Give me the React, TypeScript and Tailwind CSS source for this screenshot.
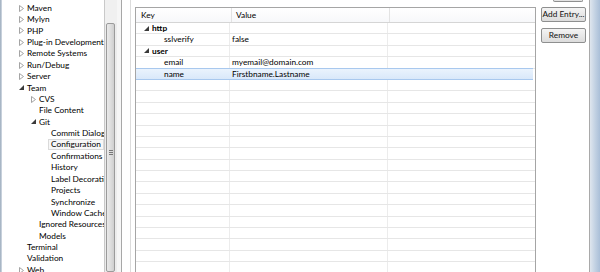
import React from "react";

type Node = { label: string; level: number; mark?: "open" | "closed"; focus?: boolean };

const TREE: Node[] = [
  { label: "Install/Update", level: 0, mark: "closed" },
  { label: "Maven", level: 0, mark: "closed" },
  { label: "Mylyn", level: 0, mark: "closed" },
  { label: "PHP", level: 0, mark: "closed" },
  { label: "Plug-in Development", level: 0, mark: "closed" },
  { label: "Remote Systems", level: 0, mark: "closed" },
  { label: "Run/Debug", level: 0, mark: "closed" },
  { label: "Server", level: 0, mark: "closed" },
  { label: "Team", level: 0, mark: "open" },
  { label: "CVS", level: 1, mark: "closed" },
  { label: "File Content", level: 1 },
  { label: "Git", level: 1, mark: "open" },
  { label: "Commit Dialog", level: 2 },
  { label: "Configuration", level: 2, focus: true },
  { label: "Confirmations and Warnings", level: 2 },
  { label: "History", level: 2 },
  { label: "Label Decorations", level: 2 },
  { label: "Projects", level: 2 },
  { label: "Synchronize", level: 2 },
  { label: "Window Cache", level: 2 },
  { label: "Ignored Resources", level: 1 },
  { label: "Models", level: 1 },
  { label: "Terminal", level: 0 },
  { label: "Validation", level: 0 },
  { label: "Web", level: 0, mark: "closed" },
];

type Row = { key: string; value?: string; section?: boolean; selected?: boolean };

const ROWS: Row[] = [
  { key: "http", section: true },
  { key: "sslverify", value: "false" },
  { key: "user", section: true },
  { key: "email", value: "myemail@domain.com" },
  { key: "name", value: "Firstbname.Lastname", selected: true },
  ...Array.from({ length: 17 }, () => ({ key: "" })),
];

const INDENT = ["pl-[25px]", "pl-[37px]", "pl-[49px]"];
const ARROW_POS = ["left-[17px]", "left-[29px]", "left-[41px]"];

function Arrow({ mark }: { mark: "open" | "closed" }) {
  if (mark === "open")
    return (
      <svg width="5" height="5" viewBox="0 0 5 5">
        <path d="M5 0 L5 5 L0 5 Z" fill="#3a3a3a" />
      </svg>
    );
  return (
    <svg width="5" height="7" viewBox="0 0 5 7">
      <path d="M0.5 0.5 L4.5 3.5 L0.5 6.5 Z" fill="none" stroke="#9a9a9a" strokeWidth="0.9" />
    </svg>
  );
}

function Button({ children }: { children: React.ReactNode }) {
  return (
    <div className="w-[45px] h-[15px] rounded-[2px] border border-[#8e8f8f] bg-gradient-to-b from-[#f4f4f4] to-[#dcdcdc] flex items-center justify-center whitespace-nowrap text-[#111]">
      {children}
    </div>
  );
}

export default function App() {
  return (
    <div className="w-[600px] h-[272px] flex overflow-hidden bg-white text-[8.3px] text-black" style={{ fontFamily: 'Lato, "Liberation Sans", sans-serif' }}>
      {/* window edge */}
      <div className="w-[2px] bg-gradient-to-r from-[#9aaabb] to-[#d6dde6]" />

      {/* preference tree */}
      <div className="w-[102px] overflow-hidden">
        <div className="mt-[-9px]">
          {TREE.map((n, i) => (
            <div key={i} className={`relative h-[11.4px] flex items-center whitespace-nowrap ${INDENT[n.level]}`}>
              {n.mark && (
                <span className={`absolute top-0 bottom-0 flex items-center ${ARROW_POS[n.level]}`}>
                  <Arrow mark={n.mark} />
                </span>
              )}
              <span className={n.focus ? "-ml-[3px] px-[2px] border border-[#dadada] bg-[#f7f7f7] leading-[9px]" : ""}>{n.label}</span>
            </div>
          ))}
        </div>
      </div>

      {/* tree scrollbar */}
      <div className="w-[13px] border-l border-[#c9c9c9] bg-[#ececec] flex flex-col">
        <div className="h-[23px] bg-[#f0f0f0]" />
        <div className="ml-[1px] w-[9px] flex-1 rounded-[2px] border border-[#9b9b9b] bg-gradient-to-r from-[#eaeaea] via-[#dedede] to-[#cfcfcf] flex flex-col items-center pt-[126px] gap-[1px]">
          <div className="w-[4px] h-px bg-[#777]" />
          <div className="w-[4px] h-px bg-[#777]" />
          <div className="w-[4px] h-px bg-[#777]" />
        </div>
      </div>

      {/* sash */}
      <div className="w-[4px] bg-[#f6f6f6]" />
      <div className="w-px bg-[#a7a7a7]" />
      <div className="w-[8px]" />
      <div className="w-px bg-[#dcdcdc]" />
      <div className="w-[4px]" />

      {/* config table */}
      <div className="pt-[7px] flex">
        <div className="w-[401px] border border-[#a5a5a5] border-b-0 bg-white">
          <div className="h-[15px] flex border-b border-[#d5d5d5] bg-gradient-to-b from-white to-[#f7f8fa]">
            <div className="w-[96px] pl-[5px] flex items-center border-r border-[#e3e3e3]">Key</div>
            <div className="w-[158px] pl-[4px] flex items-center border-r border-[#e3e3e3]">Value</div>
            <div className="flex-1" />
          </div>
          {ROWS.map((r, i) => (
            <div
              key={i}
              className={`flex border-b ${r.selected ? "bg-gradient-to-b from-[#eaf3fd] to-[#d9e8fa] border-[#a8c8ee] border-t border-t-[#a8c8ee] -mt-px h-[12.4px] mr-[2px]" : "h-[11.4px] border-[#e6e6e6]"}`}
            >
              <div className={`relative w-[94px] flex items-center border-r ${r.selected ? "border-transparent" : "border-[#ececec]"} ${r.section ? "pl-[16px] font-bold" : "pl-[28px]"}`}>
                {r.section && (
                  <span className="absolute left-[8px] top-0 bottom-0 flex items-center">
                    <Arrow mark="open" />
                  </span>
                )}
                {r.key}
              </div>
              <div className={`w-[158px] pl-[2px] flex items-center border-r ${r.selected ? "border-transparent" : "border-[#ececec]"}`}>{r.value}</div>
              <div className="flex-1" />
            </div>
          ))}
        </div>
      </div>

      {/* buttons */}
      <div className="w-[53px] pl-[5px] flex flex-col">
        <div className="ml-[12px] w-[30px] h-[2px] rounded-b-[2px] border border-t-0 border-[#8e8f8f] bg-[#e2e2e2]" />
        <div className="mt-[5px]">
          <Button>Add Entry...</Button>
        </div>
        <div className="mt-[6px]">
          <Button>Remove</Button>
        </div>
      </div>

      {/* window frame */}
      <div className="w-px bg-[#a9a9a9]" />
      <div className="flex-1 bg-gradient-to-r from-[#dfe6ee] via-[#c3d2e3] to-[#aabfd8]" />
    </div>
  );
}
